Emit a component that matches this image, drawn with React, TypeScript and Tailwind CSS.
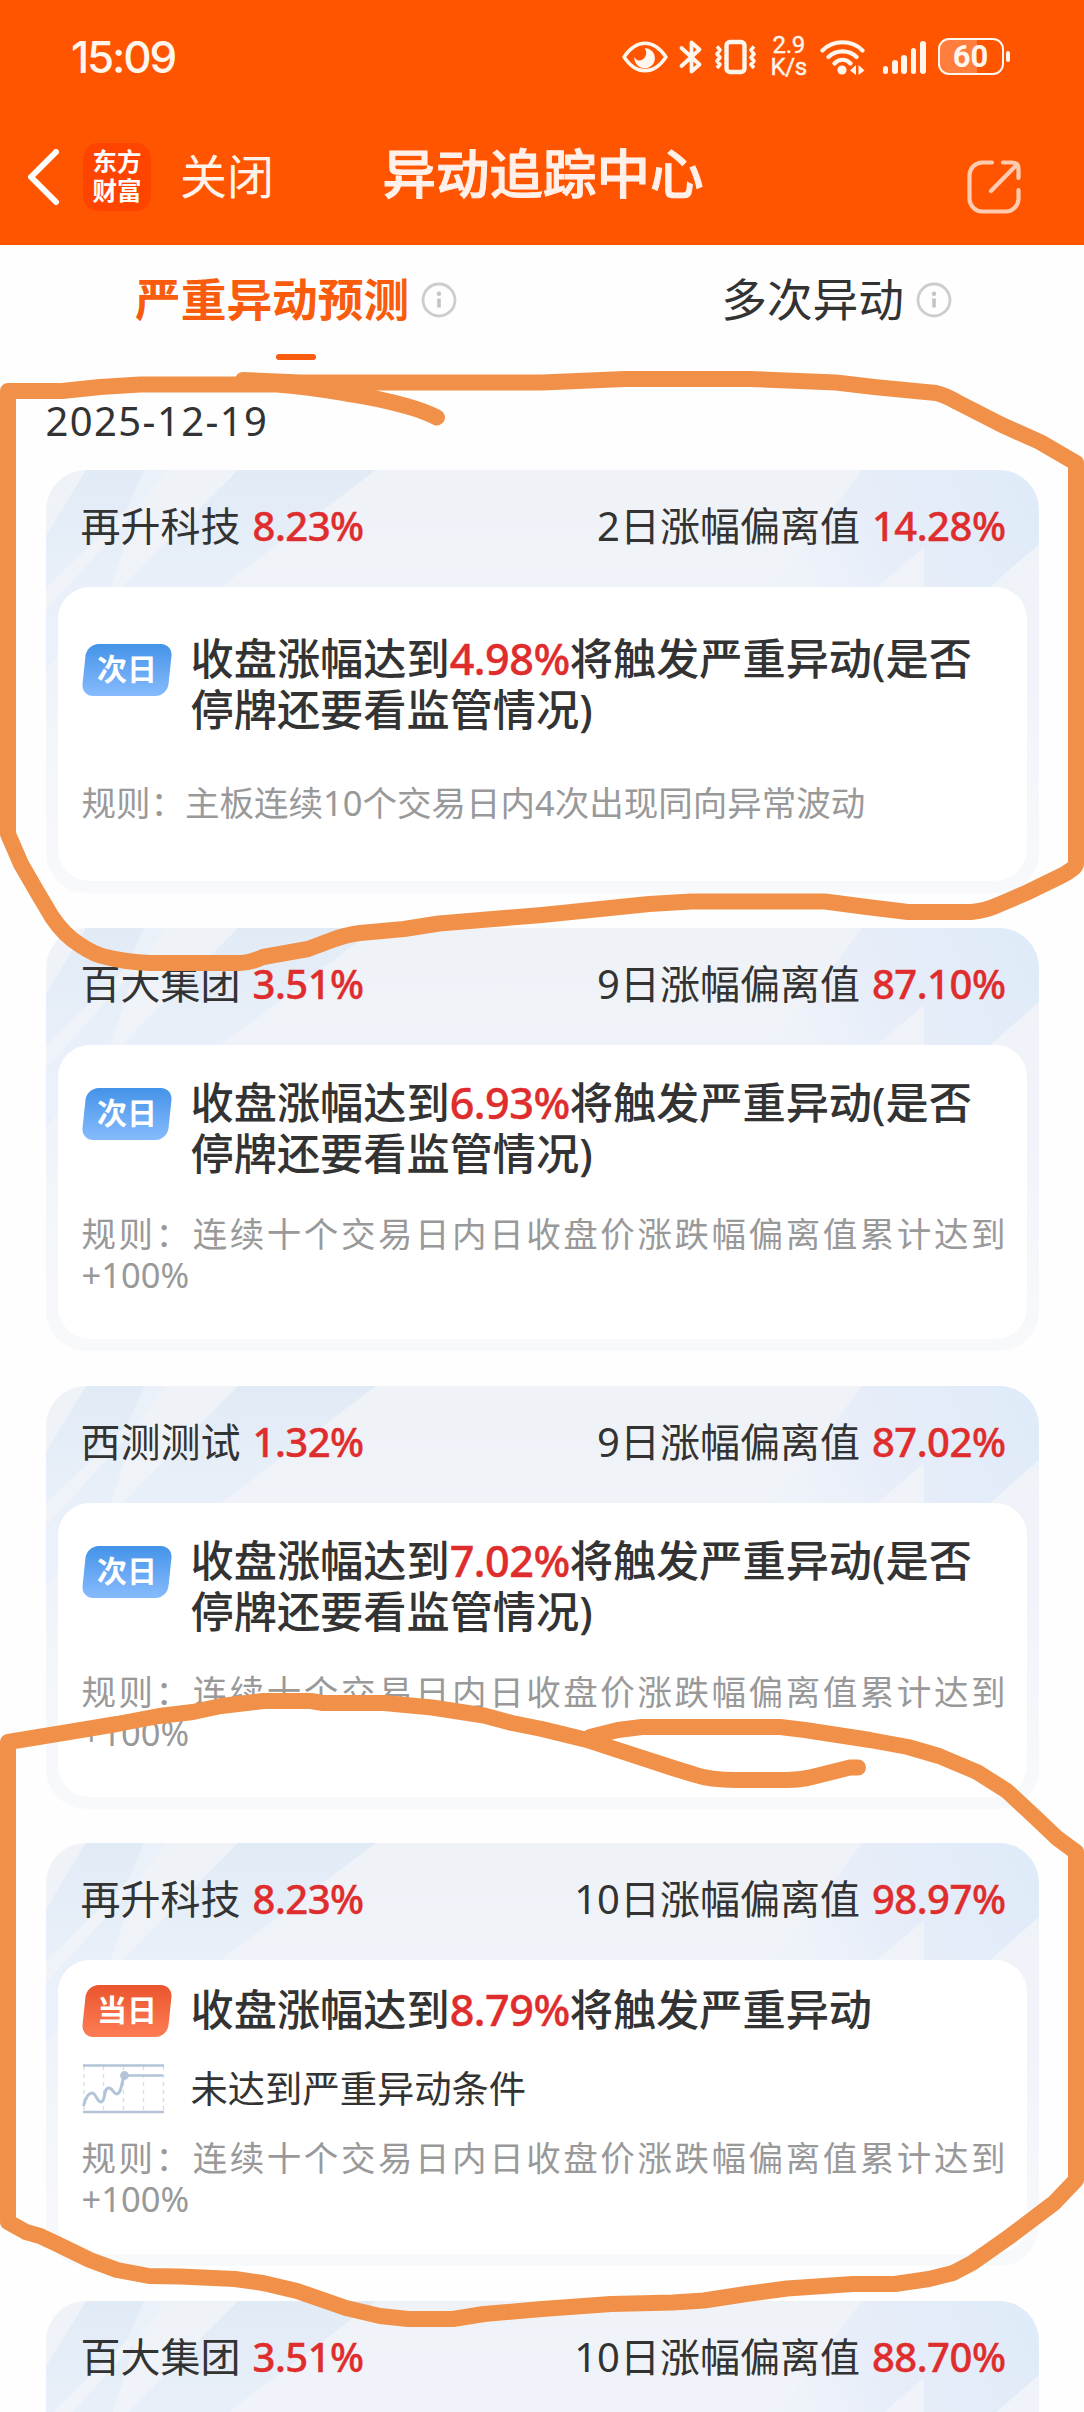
import type { ReactNode } from 'react';

type StockCard = {
  name: string;
  change: string;
  days: number;
  deviation: string;
  badge: 'next' | 'today';
  trigger: string;
  halted?: boolean;
  status?: string;
  rule: string;
};

type TabProps = {
  label: string;
  active?: boolean;
};

const TEN_DAY_RULE = '规则：连续十个交易日内日收盘价涨跌幅偏离值累计达到+100%';

const cards: StockCard[] = [
  {
    name: '再升科技',
    change: '8.23%',
    days: 2,
    deviation: '14.28%',
    badge: 'next',
    trigger: '4.98%',
    halted: true,
    rule: '规则：主板连续10个交易日内4次出现同向异常波动',
  },
  {
    name: '百大集团',
    change: '3.51%',
    days: 9,
    deviation: '87.10%',
    badge: 'next',
    trigger: '6.93%',
    halted: true,
    rule: TEN_DAY_RULE,
  },
  {
    name: '西测测试',
    change: '1.32%',
    days: 9,
    deviation: '87.02%',
    badge: 'next',
    trigger: '7.02%',
    halted: true,
    rule: TEN_DAY_RULE,
  },
  {
    name: '再升科技',
    change: '8.23%',
    days: 10,
    deviation: '98.97%',
    badge: 'today',
    trigger: '8.79%',
    status: '未达到严重异动条件',
    rule: TEN_DAY_RULE,
  },
];

const signalBars = [8, 14, 19, 26, 33];

function StatusIcons() {
  return (
    <div className="flex h-[40px] items-center text-[#fff6ee]">
      <svg width="46" height="32" viewBox="0 0 46 32" fill="none">
        <path
          d="M2 16C8 7 15 2.2 23 2.2S38 7 44 16C38 25 31 29.8 23 29.8S8 25 2 16Z"
          stroke="currentColor"
          strokeWidth="3.4"
          strokeLinejoin="round"
        />
        <path
          d="M22.500 7A10.200 10.200 0 1 1 12.600 15.500C13 19 17 20.500 20.500 18.500C24.500 16 25.500 11 22.500 7Z"
          fill="currentColor"
        />
      </svg>
      <svg className="ml-[10px]" width="26" height="36" viewBox="0 0 26 36" fill="none">
        <path
          d="M3.500 9L21.500 25.500L13.500 32.500V3.500L21.500 10.500L3.500 27"
          stroke="currentColor"
          strokeWidth="3.8"
          strokeLinejoin="round"
          strokeLinecap="round"
        />
      </svg>
      <svg className="ml-[10px]" width="43" height="36" viewBox="0 0 43 36" fill="none">
        <rect x="12.500" y="3" width="18" height="30" rx="3.500" stroke="currentColor" strokeWidth="4.400" />
        <path
          d="M3 7.500L6 11L3 15L6 18.500L3 22L6 25.500L3 29M40 7.500L37 11L40 15L37 18.500L40 22L37 25.500L40 29"
          stroke="currentColor"
          strokeWidth="3.6"
          strokeLinejoin="round"
        />
      </svg>
      <div className="ml-[13px] flex w-[38px] flex-col items-center [font-family:Roboto,sans-serif] text-[24px] leading-[21.500px] tracking-[-0.300px] [-webkit-text-stroke:0.400px_#fff6ee]">
        <span>2.9</span>
        <span>K/s</span>
      </div>
      <svg className="ml-[12px]" width="45" height="36" viewBox="0 0 45 36" fill="none">
        <path
          d="M2.500 11.500C13 0.500 32 0.500 42.500 11.500M8.500 18C16 10.500 29 10.500 36.500 18M14.500 24.500C19 19.500 26 19.500 30.500 24.500"
          stroke="currentColor"
          strokeWidth="4.200"
          strokeLinecap="round"
        />
        <circle cx="22" cy="31" r="4.600" fill="currentColor" />
        <path d="M30 31.500L36 26V36ZM44.500 31.500L38.500 26V36Z" fill="currentColor" />
      </svg>
      <div className="ml-[18px] flex h-[34px] items-end gap-[3.600px]">
        {signalBars.map((height) => (
          <span key={height} className="w-[5.700px] rounded-full bg-[#fff6ee]" style={{ height }} />
        ))}
      </div>
      <div className="ml-[12px] flex h-[37px] w-[66px] items-center justify-center rounded-[11px] border-[2.500px] border-[#fff6ee] bg-[linear-gradient(90deg,rgba(255,255,255,0.24)_60%,transparent_60%)] [font-family:Roboto,sans-serif] text-[31px] font-bold leading-none">
        60
      </div>
      <span className="ml-[2.500px] h-[11px] w-[4px] rounded-full bg-[#fff6ee]" />
    </div>
  );
}

function TopBar() {
  return (
    <header className="h-[245px] shrink-0 bg-[#ff5500]">
      <div className="flex h-[113px] items-center justify-between pr-[74px] pl-[71px] text-[#fff6ee]">
        <span className="[font-family:Inter,sans-serif] text-[44px] font-medium leading-none tracking-[-2.200px]">
          15:09
        </span>
        <StatusIcons />
      </div>
      <div className="grid h-[128px] grid-cols-[360px_1fr_360px] items-center">
        <div className="flex items-center">
          <svg className="ml-[26px]" width="34" height="56" viewBox="0 0 34 56" fill="none">
            <path d="M30 3L5 28L30 53" stroke="#fff" strokeWidth="6" strokeLinejoin="round" strokeLinecap="round" />
          </svg>
          <div className="ml-[23px] flex h-[68px] w-[68px] flex-col items-center justify-center rounded-[15px] bg-[#ff4400] pb-[2px] text-[24.500px] font-bold leading-[29px] text-white">
            <span>东方</span>
            <span>财富</span>
          </div>
          <span className="ml-[29px] pb-[2px] text-[47px] leading-none text-[#fff3ea]">关闭</span>
        </div>
        <h1 className="pb-[6px] pl-[2px] text-center text-[53.500px] font-medium leading-none text-[#fff0ea] [-webkit-text-stroke:1px_#fff0ea]">
          异动追踪中心
        </h1>
        <svg className="mt-[20px] mr-[62px] ml-auto" width="56" height="56" viewBox="0 0 56 56" fill="none">
          <path
            d="M26 3.500H16A13 13 0 0 0 3.500 16V40A13 13 0 0 0 16 52.500H40A13 13 0 0 0 52.500 40V31M37 3.500H46Q52.500 3.500 52.500 10V19M51 5.500L25 32"
            stroke="#ffcbb0"
            strokeWidth="4.200"
            strokeLinecap="round"
          />
        </svg>
      </div>
    </header>
  );
}

function InfoIcon() {
  return (
    <svg width="36" height="36" viewBox="0 0 36 36" fill="none">
      <circle cx="18" cy="18" r="16" stroke="#cdcdcd" strokeWidth="2.800" />
      <circle cx="18" cy="11.800" r="2.200" fill="#c4c4c4" />
      <path d="M18 16.500V25.500" stroke="#c4c4c4" strokeWidth="3.600" />
    </svg>
  );
}

function Tab({ label, active = false }: TabProps) {
  return (
    <div className="flex flex-col items-center">
      <div className="flex h-[60px] items-center gap-[12px]">
        <span
          className={
            active
              ? 'text-[45.700px] font-bold leading-none text-[#f85c0c]'
              : 'text-[45.700px] leading-none text-[#333]'
          }
        >
          {label}
        </span>
        <InfoIcon />
      </div>
      {active ? <span className="mt-[24px] h-[6px] w-[40px] rounded-full bg-[#f85c0c]" /> : null}
    </div>
  );
}

function HeaderPattern() {
  return (
    <svg className="absolute inset-0" width="994" height="423" viewBox="0 0 994 423" fill="none">
      <defs>
        <linearGradient id="facet" x1="0" y1="0" x2="0" y2="150" gradientUnits="userSpaceOnUse">
          <stop stopColor="#e1ebf6" />
          <stop offset="1" stopColor="#ebf1fa" />
        </linearGradient>
        <linearGradient id="corner" x1="994" y1="0" x2="760" y2="117" gradientUnits="userSpaceOnUse">
          <stop stopColor="#dfebf9" />
          <stop offset="0.600" stopColor="#e6edf9" />
          <stop offset="1" stopColor="#eef2f9" />
        </linearGradient>
      </defs>
      <path d="M40 0H98L82 38L0 118V66Z" fill="url(#facet)" />
      <path d="M89 42L65 117L0 200V140Z" fill="url(#facet)" />
      <path d="M98 0H120L89 42L82 38Z" fill="#ebf1f8" />
      <path d="M192 0H330L175 117H76Z" fill="url(#facet)" />
      <path d="M816 0H994V73L944 117H878V77L831 117H728Z" fill="url(#corner)" />
    </svg>
  );
}

function DayBadge({ kind }: { kind: StockCard['badge'] }) {
  return (
    <div
      className={
        kind === 'next'
          ? 'mx-[2px] mt-[10px] flex h-[52px] w-[86px] -skew-x-6 items-center justify-center rounded-[12px] bg-linear-to-b from-[#4393e8] to-[#86bbfd]'
          : 'mx-[2px] flex h-[52px] w-[86px] -skew-x-6 items-center justify-center rounded-[12px] bg-linear-to-b from-[#ea552d] to-[#fd7c54]'
      }
    >
      <span className="skew-x-6 pb-[2px] text-[30px] font-bold leading-none text-white">
        {kind === 'next' ? '次日' : '当日'}
      </span>
    </div>
  );
}

function TrendIcon() {
  return (
    <svg width="83" height="52" viewBox="0 0 83 52" fill="none">
      <path
        d="M2 3V49M21.500 3V49M41.500 3V49M61.500 3V49M81.500 3V49"
        stroke="#d5dfe9"
        strokeWidth="1.400"
        strokeDasharray="4 4"
      />
      <path d="M1 2.500H82M1 49H82M42 12.500H81" stroke="#b3c4d8" strokeWidth="2.600" />
      <path
        d="M1.500 43C4 33 7 30 10 30C14 30 15 39 19 39C24 38 21 25 27 25C31 25 31 31 35 31C40 30 39 19 42.500 13"
        stroke="#b3c4d8"
        strokeWidth="3"
      />
      <circle cx="42.500" cy="12.500" r="4.400" fill="#b3c4d8" />
    </svg>
  );
}

function Red({ children }: { children: ReactNode }) {
  return (
    <span className="font-medium tracking-[-0.012em] text-[#df2d2d] [-webkit-text-stroke:0.400px_#df2d2d]">
      {children}
    </span>
  );
}

function CardHeader({ card }: { card: Pick<StockCard, 'name' | 'change' | 'days' | 'deviation'> }) {
  return (
    <div className="relative flex h-[117px] items-center justify-between pr-[21px] pb-[5px] pl-[23px] text-[40px] leading-none text-[#333]">
      <div className="flex gap-[12px]">
        <span>{card.name}</span>
        <Red>{card.change}</Red>
      </div>
      <div className="flex gap-[12px]">
        <span>{card.days}日涨幅偏离值</span>
        <Red>{card.deviation}</Red>
      </div>
    </div>
  );
}

function Card({ card }: { card: StockCard }) {
  return (
    <article className="relative h-[423px] shrink-0 overflow-hidden rounded-[40px] bg-linear-to-b from-[#eff3f8] via-[#f0f4fa] to-[#f8f9fb] px-[12px] pb-[12px]">
      <HeaderPattern />
      <CardHeader card={card} />
      <div className="relative flex h-[294px] flex-col justify-evenly rounded-[32px] bg-white px-[24px] pb-[11px] text-[#333]">
        <div className="flex">
          <div className="w-[109px] shrink-0">
            <DayBadge kind={card.badge} />
          </div>
          <p className="-mt-px mb-px text-[43.200px] font-medium leading-[51px] whitespace-nowrap">
            收盘涨幅达到<Red>{card.trigger}</Red>将触发严重异动
            {card.halted ? (
              <>
                (是否
                <br />
                停牌还要看监管情况)
              </>
            ) : null}
          </p>
        </div>
        {card.status ? (
          <div className="flex h-[50px] items-center">
            <div className="w-[109px] shrink-0 pt-[4px]">
              <TrendIcon />
            </div>
            <span className="pt-[3px] text-[37.300px] leading-none">{card.status}</span>
          </div>
        ) : null}
        <p className="w-[924px] text-justify text-[34.500px] leading-[41px] text-[#999]">{card.rule}</p>
      </div>
    </article>
  );
}

// Freehand marker loops drawn over the first and fourth cards.
function MarkerStrokes() {
  return (
    <svg
      className="pointer-events-none absolute inset-0"
      width="1084"
      height="2412"
      viewBox="0 0 1084 2412"
      fill="none"
      stroke="#f19149"
      strokeWidth="16"
      strokeLinecap="round"
      strokeLinejoin="round"
    >
      <path d="M437 417.500Q424 411 408 406.500Q378 398 346 393.500Q310 387 277 384.500H140L100 387L62 391H8V834L21 864L36 890L52 917Q64 935 80 945Q95 955 106 957Q125 962 150 963H240Q250 963 263 957L308 949L332 940Q345 935 360 933L404 929L439 923.500L542 915L649 904L691 901.500H825L867 907L908 912H971Q985 911 998 905L1026 893L1061 876Q1076 868 1076 864V463L1040 442L1002 425L957 402Q945 395 936 393L874 387L836 382.500L749 379H625L542 382.500H300L243 380" />
      <path d="M858 1767.500H850L812 1777Q800 1780 787 1780H736Q710 1780 694 1774.500L673 1768L587 1740L542 1729L512 1723L484 1715.500L432 1707.500L384 1703H323L311 1701H263L221 1706L193 1712L159 1716L117 1724L69 1732L8 1742V2222L26 2232L40 2236L55 2243L90 2260L117 2270L149 2276L180 2276.500L235 2279L263 2283L297 2291L346 2308L380 2316L408 2319H453L484 2314L542 2309L611 2304L673 2302.500L704 2300.500L746 2294L787 2288.500L853 2284H895L929 2279L953 2273L972 2263L1009 2237L1054 2203L1076 2180V1852L1057 1838L1036 1818L1007 1791L977 1772L939 1756L908 1747L870 1740L805 1730L780 1727H642L618 1730L590 1737" />
    </svg>
  );
}

export default function App() {
  return (
    <main className="relative flex h-[2412px] w-[1084px] flex-col overflow-hidden bg-[#fefefe] [font-family:'Noto_Sans','Noto_Sans_CJK_SC',sans-serif]">
      <TopBar />
      <nav className="flex h-[145px] shrink-0 justify-around pt-[25px] pl-[3px]">
        <Tab label="严重异动预测" active />
        <Tab label="多次异动" />
      </nav>
      <section className="flex shrink-0 flex-col px-[45.500px] pt-[5px]">
        <time className="h-[75px] text-[40px] leading-[52px] tracking-[1.400px] text-[#333]">2025-12-19</time>
        <div className="flex flex-col gap-[34.800px]">
          {cards.map((card) => (
            <Card key={`${card.name}-${card.days}`} card={card} />
          ))}
          <article className="relative h-[111px] overflow-hidden rounded-t-[40px] bg-linear-to-b from-[#eff3f8] to-[#f0f4fa] px-[12px]">
            <HeaderPattern />
            <CardHeader card={{ name: '百大集团', change: '3.51%', days: 10, deviation: '88.70%' }} />
          </article>
        </div>
      </section>
      <MarkerStrokes />
    </main>
  );
}
